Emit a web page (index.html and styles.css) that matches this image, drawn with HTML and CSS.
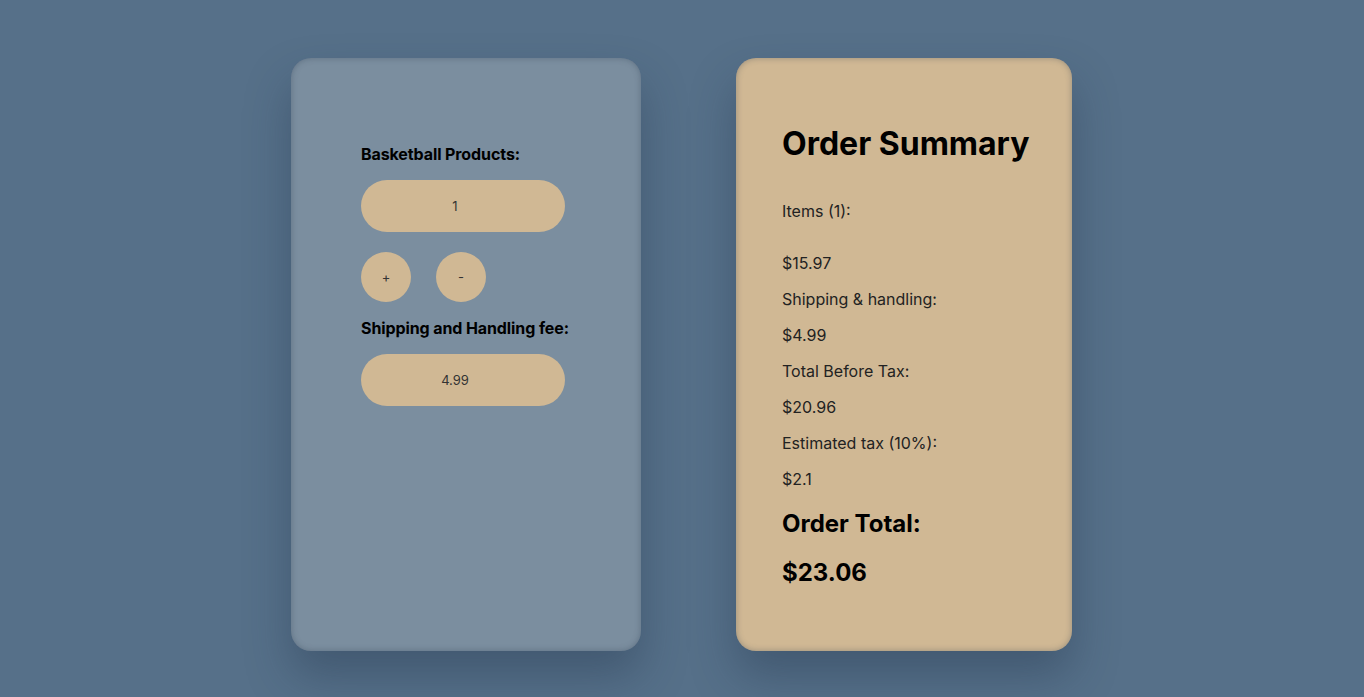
FILE: index.html
```html
<!DOCTYPE html>
<html>
<head>
<meta charset="utf-8">
<link rel="stylesheet" href="styles.css">
</head>
<body>
<main class="page">
  <section class="card card-form">
    <label class="label label-first">Basketball Products:</label>
    <div class="field">1</div>
    <div class="buttons">
      <button class="round">+</button>
      <button class="round">-</button>
    </div>
    <label class="label">Shipping and Handling fee:</label>
    <div class="field">4.99</div>
  </section>
  <section class="card card-summary">
    <h1 class="title">Order Summary</h1>
    <p class="line line-items">Items (1):</p>
    <p class="line">$15.97</p>
    <p class="line">Shipping &amp; handling:</p>
    <p class="line">$4.99</p>
    <p class="line">Total Before Tax:</p>
    <p class="line">$20.96</p>
    <p class="line">Estimated tax (10%):</p>
    <p class="line">$2.1</p>
    <h2 class="total">Order Total:</h2>
    <h2 class="total">$23.06</h2>
  </section>
</main>
</body>
</html>
```
FILE: styles.css
```css
* { box-sizing: border-box; }
html, body { margin: 0; height: 100%; }
body {
  background: #567089;
  font-family: Inter, "Noto Sans", sans-serif;
  color: #000;
}
.page {
  display: flex;
  justify-content: center;
  gap: 95px;
  padding-top: 58px;
  padding-right: 1px;
}
.card {
  height: 593px;
  border-radius: 20px;
  box-shadow: 0 25px 45px rgba(30, 45, 70, 0.35), inset 0 0 6px rgba(40, 55, 75, 0.35);
}
.card-form {
  width: 350px;
  background: #7b8e9f;
  padding: 87px 70px 0 70px;
  display: flex;
  flex-direction: column;
  align-items: flex-start;
}
.label {
  font-weight: 700;
  font-size: 16px;
  line-height: 18px;
  letter-spacing: -0.1px;
  white-space: nowrap;
  margin-bottom: 17px;
}
.field {
  width: 204px;
  height: 52px;
  border-radius: 26px;
  background: #d0b894;
  color: #333;
  font-size: 13px;
  padding-right: 16px;
  display: flex;
  align-items: center;
  justify-content: center;
}
.buttons {
  display: flex;
  gap: 25px;
  margin: 20px 0 17px;
}
.round {
  width: 50px;
  height: 50px;
  border-radius: 50%;
  border: none;
  background: #d0b894;
  color: #333;
  font-family: Inter, sans-serif;
  font-size: 13px;
  padding: 0;
}
.card-summary {
  width: 336px;
  background: #d0b894;
  padding: 45px 46px 0;
}
.title {
  font-size: 32px;
  font-weight: 700;
  margin: 21px 0 0;
  line-height: 39px;
  white-space: nowrap;
}
.line {
  font-size: 16px;
  line-height: 20px;
  margin: 16px 0 0;
  color: #222;
}
.line-items { margin-top: 38px; margin-bottom: 32px; }
.line-items + .line { margin-top: 0; }
.total {
  font-size: 24px;
  font-weight: 700;
  line-height: 29px;
  margin: 20px 0 0;
}
```
